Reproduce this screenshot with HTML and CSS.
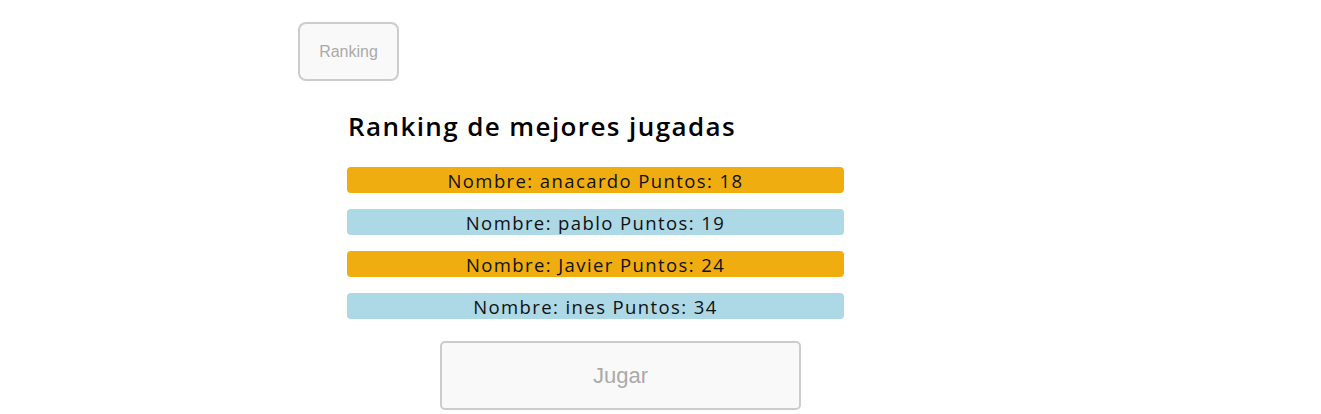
FILE: index.html
```html
<!DOCTYPE html>
<html lang="es">
<head>
<meta charset="utf-8">
<title>Ranking</title>
<link rel="stylesheet" href="styles.css">
</head>
<body>
<div class="page">
  <button class="btn btn-ranking">Ranking</button>
  <section class="ranking">
    <h2 class="ranking-title">Ranking de mejores jugadas</h2>
    <ul class="ranking-list">
      <li class="row row-orange">Nombre: anacardo Puntos: 18</li>
      <li class="row row-blue">Nombre: pablo Puntos: 19</li>
      <li class="row row-orange">Nombre: Javier Puntos: 24</li>
      <li class="row row-blue">Nombre: ines Puntos: 34</li>
    </ul>
    <button class="btn btn-play">Jugar</button>
  </section>
</div>
</body>
</html>
```

FILE: styles.css
```css
html, body {
  margin: 0;
  padding: 0;
  background: #ffffff;
}
.page {
  padding: 22px 0 0 298px;
  display: flex;
  flex-direction: column;
  align-items: flex-start;
}
.btn {
  font-family: "Liberation Sans", Arial, sans-serif;
  background: #f9f9f9;
  border: 2px solid #cccccc;
  color: #aaaaaa;
  cursor: pointer;
}
.btn-ranking {
  width: 101px;
  height: 59px;
  border-radius: 8px;
  font-size: 16px;
}
.ranking {
  margin-left: 49px;
  width: 497px;
  display: flex;
  flex-direction: column;
}
.ranking-title {
  font-family: "Open Sans", "Noto Sans", sans-serif;
  font-weight: 600;
  font-size: 26px;
  letter-spacing: 1.4px;
  color: #000;
  margin: 28px 0 0 1px;
  line-height: 34px;
}
.ranking-list {
  list-style: none;
  margin: 24px 0 0 0;
  padding: 0;
  display: flex;
  flex-direction: column;
  gap: 16px;
}
.row {
  height: 26px;
  line-height: 27px;
  border-radius: 4px;
  text-align: center;
  font-family: "Open Sans", "Noto Sans", sans-serif;
  font-size: 18.5px;
  letter-spacing: 1.4px;
  color: #111;
}
.row-orange { background: #f0ad10; }
.row-blue { background: #add8e6; }
.btn-play {
  margin: 22px 0 0 93px;
  width: 361px;
  height: 69px;
  border-radius: 5px;
  font-size: 22px;
}
```
